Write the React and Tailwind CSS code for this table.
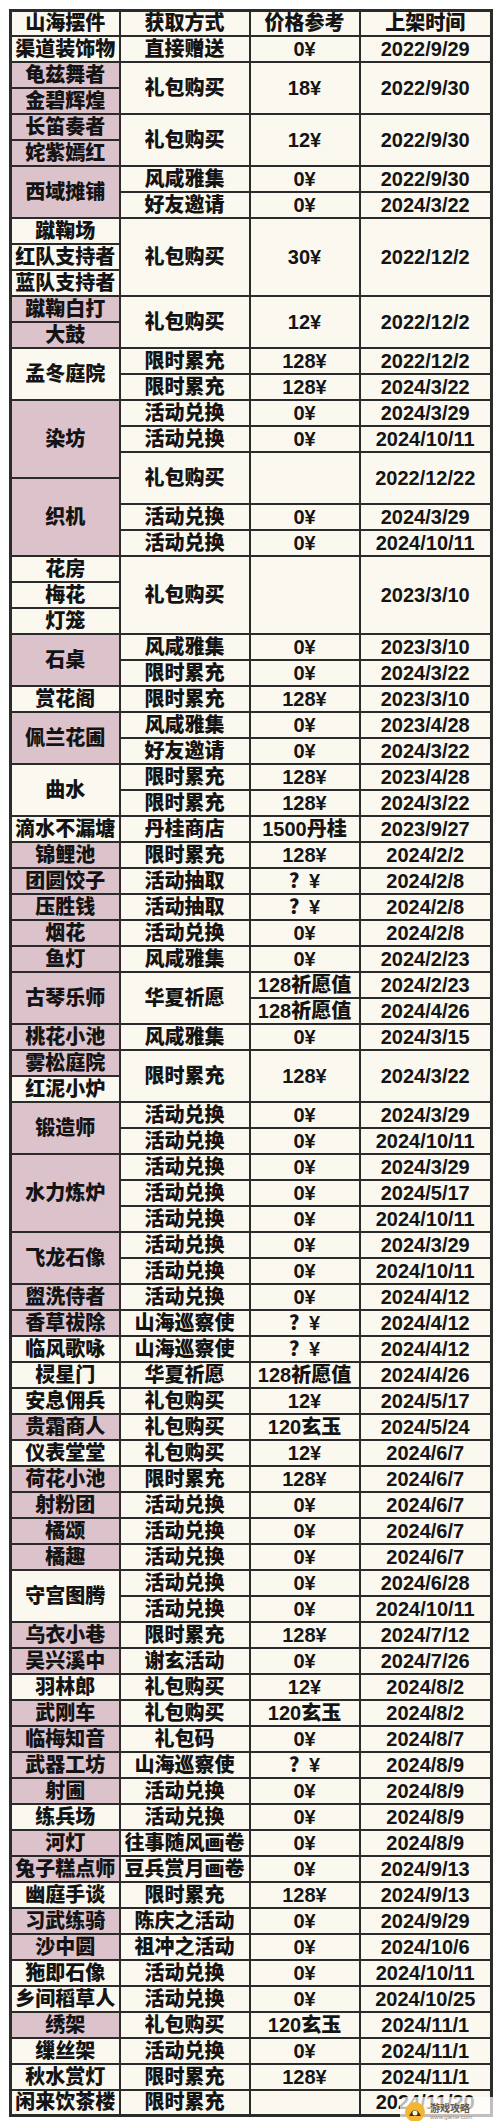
import React from "react";

// one cell: [text, rowSpan, pink]
const N = (t, s = 1) => [t, s, false];
const P = (t, s = 1) => [t, s, true];

const rows = [
  [N("渠道装饰物"), N("直接赠送"), N("0¥"), N("2022/9/29")],
  [P("龟兹舞者"), N("礼包购买", 2), N("18¥", 2), N("2022/9/30", 2)],
  [P("金碧辉煌")],
  [P("长笛奏者"), N("礼包购买", 2), N("12¥", 2), N("2022/9/30", 2)],
  [P("姹紫嫣红")],
  [P("西域摊铺", 2), N("风咸雅集"), N("0¥"), N("2022/9/30")],
  [N("好友邀请"), N("0¥"), N("2024/3/22")],
  [N("蹴鞠场"), N("礼包购买", 3), N("30¥", 3), N("2022/12/2", 3)],
  [N("红队支持者")],
  [N("蓝队支持者")],
  [P("蹴鞠白打"), N("礼包购买", 2), N("12¥", 2), N("2022/12/2", 2)],
  [P("大鼓")],
  [N("孟冬庭院", 2), N("限时累充"), N("128¥"), N("2022/12/2")],
  [N("限时累充"), N("128¥"), N("2024/3/22")],
  [P("染坊", 3), N("活动兑换"), N("0¥"), N("2024/3/29")],
  [N("活动兑换"), N("0¥"), N("2024/10/11")],
  [N("礼包购买", 2), N("", 2), N("2022/12/22", 2)],
  [P("织机", 3)],
  [N("活动兑换"), N("0¥"), N("2024/3/29")],
  [N("活动兑换"), N("0¥"), N("2024/10/11")],
  [N("花房"), N("礼包购买", 3), N("", 3), N("2023/3/10", 3)],
  [N("梅花")],
  [N("灯笼")],
  [P("石桌", 2), N("风咸雅集"), N("0¥"), N("2023/3/10")],
  [N("限时累充"), N("0¥"), N("2024/3/22")],
  [N("赏花阁"), N("限时累充"), N("128¥"), N("2023/3/10")],
  [P("佩兰花圃", 2), N("风咸雅集"), N("0¥"), N("2023/4/28")],
  [N("好友邀请"), N("0¥"), N("2024/3/22")],
  [N("曲水", 2), N("限时累充"), N("128¥"), N("2023/4/28")],
  [N("限时累充"), N("128¥"), N("2024/3/22")],
  [N("滴水不漏塘"), N("丹桂商店"), N("1500丹桂"), N("2023/9/27")],
  [P("锦鲤池"), N("限时累充"), N("128¥"), N("2024/2/2")],
  [P("团圆饺子"), N("活动抽取"), N("？¥"), N("2024/2/8")],
  [P("压胜钱"), N("活动抽取"), N("？¥"), N("2024/2/8")],
  [P("烟花"), N("活动兑换"), N("0¥"), N("2024/2/8")],
  [P("鱼灯"), N("风咸雅集"), N("0¥"), N("2024/2/23")],
  [P("古琴乐师", 2), N("华夏祈愿", 2), N("128祈愿值"), N("2024/2/23")],
  [N("128祈愿值"), N("2024/4/26")],
  [P("桃花小池"), N("风咸雅集"), N("0¥"), N("2024/3/15")],
  [P("雾松庭院"), N("限时累充", 2), N("128¥", 2), N("2024/3/22", 2)],
  [N("红泥小炉")],
  [P("锻造师", 2), N("活动兑换"), N("0¥"), N("2024/3/29")],
  [N("活动兑换"), N("0¥"), N("2024/10/11")],
  [P("水力炼炉", 3), N("活动兑换"), N("0¥"), N("2024/3/29")],
  [N("活动兑换"), N("0¥"), N("2024/5/17")],
  [N("活动兑换"), N("0¥"), N("2024/10/11")],
  [P("飞龙石像", 2), N("活动兑换"), N("0¥"), N("2024/3/29")],
  [N("活动兑换"), N("0¥"), N("2024/10/11")],
  [P("盥洗侍者"), N("活动兑换"), N("0¥"), N("2024/4/12")],
  [P("香草祓除"), N("山海巡察使"), N("？¥"), N("2024/4/12")],
  [N("临风歌咏"), N("山海巡察使"), N("？¥"), N("2024/4/12")],
  [N("棂星门"), N("华夏祈愿"), N("128祈愿值"), N("2024/4/26")],
  [N("安息佣兵"), N("礼包购买"), N("12¥"), N("2024/5/17")],
  [P("贵霜商人"), N("礼包购买"), N("120玄玉"), N("2024/5/24")],
  [N("仪表堂堂"), N("礼包购买"), N("12¥"), N("2024/6/7")],
  [P("荷花小池"), N("限时累充"), N("128¥"), N("2024/6/7")],
  [P("射粉团"), N("活动兑换"), N("0¥"), N("2024/6/7")],
  [P("橘颂"), N("活动兑换"), N("0¥"), N("2024/6/7")],
  [P("橘趣"), N("活动兑换"), N("0¥"), N("2024/6/7")],
  [N("守宫图腾", 2), N("活动兑换"), N("0¥"), N("2024/6/28")],
  [N("活动兑换"), N("0¥"), N("2024/10/11")],
  [P("乌衣小巷"), N("限时累充"), N("128¥"), N("2024/7/12")],
  [P("吴兴溪中"), N("谢玄活动"), N("0¥"), N("2024/7/26")],
  [N("羽林郎"), N("礼包购买"), N("12¥"), N("2024/8/2")],
  [P("武刚车"), N("礼包购买"), N("120玄玉"), N("2024/8/2")],
  [P("临梅知音"), N("礼包码"), N("0¥"), N("2024/8/7")],
  [P("武器工坊"), N("山海巡察使"), N("？¥"), N("2024/8/9")],
  [P("射圃"), N("活动兑换"), N("0¥"), N("2024/8/9")],
  [N("练兵场"), N("活动兑换"), N("0¥"), N("2024/8/9")],
  [P("河灯"), N("往事随风画卷"), N("0¥"), N("2024/8/9")],
  [P("兔子糕点师"), N("豆兵赏月画卷"), N("0¥"), N("2024/9/13")],
  [N("幽庭手谈"), N("限时累充"), N("128¥"), N("2024/9/13")],
  [P("习武练骑"), N("陈庆之活动"), N("0¥"), N("2024/9/29")],
  [P("沙中圆"), N("祖冲之活动"), N("0¥"), N("2024/10/6")],
  [N("狏即石像"), N("活动兑换"), N("0¥"), N("2024/10/11")],
  [N("乡间稻草人"), N("活动兑换"), N("0¥"), N("2024/10/25")],
  [P("绣架"), N("礼包购买"), N("120玄玉"), N("2024/11/1")],
  [N("缫丝架"), N("活动兑换"), N("0¥"), N("2024/11/1")],
  [N("秋水赏灯"), N("限时累充"), N("128¥"), N("2024/11/1")],
  [N("闲来饮茶楼"), N("限时累充"), N(""), N("2024/11/20")],
];

const head = ["山海摆件", "获取方式", "价格参考", "上架时间"];

export default function App() {
  return (
    <div className="min-h-screen bg-white pt-[9px] pl-[9px] pb-[10px] relative font-['Liberation_Sans','Noto_Sans_CJK_SC',sans-serif] text-[#141414]">
      <table className="border-collapse border-[3px] border-[#2b2b2b] table-fixed w-[481px] text-[20px] font-black leading-none text-center">
        <colgroup>
          <col className="w-[109px]" />
          <col className="w-[130px]" />
          <col className="w-[110px]" />
          <col className="w-[132px]" />
        </colgroup>
        <thead>
          <tr className="h-[25px]">
            {head.map((h) => (
              <th key={h} className="border-2 border-[#2b2b2b] bg-[#fbf8ef] p-0 font-black">
                {h}
              </th>
            ))}
          </tr>
        </thead>
        <tbody>
          {rows.map((row, i) => (
            <tr key={i} className="h-[26px]">
              {row.map(([text, span, pink], j) => (
                <td
                  key={j}
                  rowSpan={span}
                  className={
                    "border-2 border-[#2b2b2b] p-0 whitespace-nowrap " +
                    (pink ? "bg-[#dcc2cb]" : "bg-[#fbf8ef]")
                  }
                >
                  {text}
                </td>
              ))}
            </tr>
          ))}
        </tbody>
      </table>

      {/* watermark */}
      <div className="absolute right-0 bottom-0 w-[100px] h-[30px] bg-white/70 flex items-center gap-1 px-1 rounded-tl-md">
        <svg width="22" height="22" viewBox="0 0 22 22">
          <circle cx="11" cy="11" r="10" fill="#f2b632" />
          <path d="M5 15 Q11 3 17 15 Z" fill="#3b2a1a" />
          <circle cx="11" cy="12" r="2.5" fill="#fff3d0" />
        </svg>
        <div className="flex flex-col leading-none">
          <span className="text-[10px] font-bold text-[#6b5a4a]">游戏攻略</span>
          <span className="text-[6px] text-[#9a8a7a]">www.game.com</span>
        </div>
      </div>
    </div>
  );
}
